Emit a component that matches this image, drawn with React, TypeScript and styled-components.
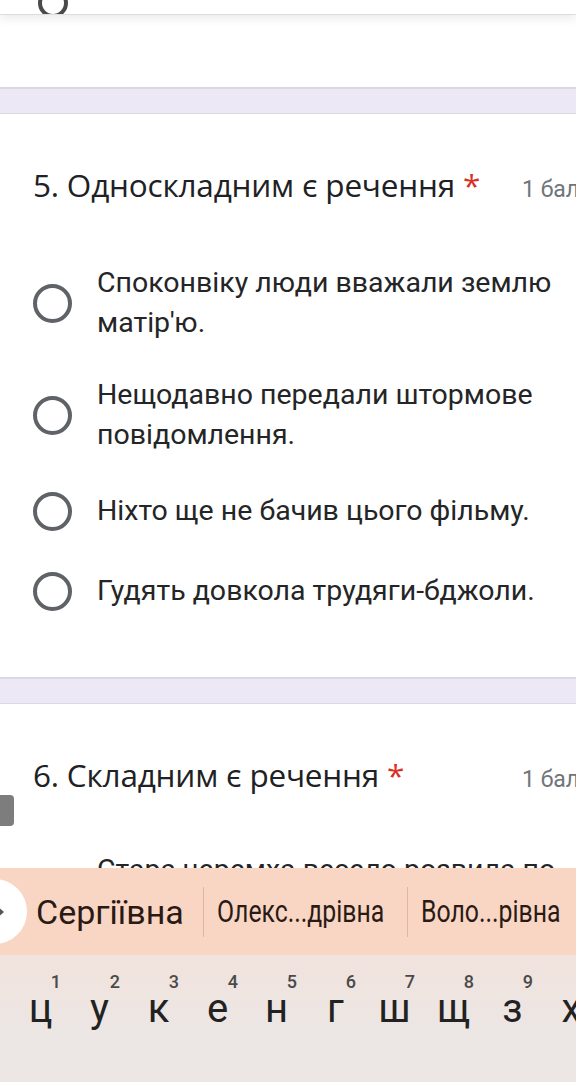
import React from 'react'
import styled, { createGlobalStyle } from 'styled-components'

const COLORS = {
  text: '#202124',
  grey: '#5f6368',
  band: '#ede8f6',
  bandLine: '#dcd8e0',
  red: '#d93025',
  peach: '#f9d5c4',
}

const GlobalStyle = createGlobalStyle`
  html, body {
    margin: 0;
    padding: 0;
    background: #fff;
    overflow: hidden;
  }
`

const Page = styled.div`
  position: relative;
  display: flex;
  flex-direction: column;
  width: 576px;
  height: 1082px;
  overflow: hidden;
  background: #fff;
  font-family: Roboto, 'Noto Sans', sans-serif;
  color: ${COLORS.text};
`

const Form = styled.main`
  flex: 1;
  min-height: 0;
  overflow: hidden;
`

const CardTail = styled.div`
  height: 14px;
  padding-left: 33px;
  border-bottom: 1px solid #dedede;
  box-shadow: 0 4px 10px rgba(0, 0, 0, 0.08);
  overflow: hidden;
`

const PeekRadio = styled.div`
  width: 22px;
  height: 22px;
  margin-top: -12px;
  margin-left: 5px;
  border-radius: 50%;
  border: 4px solid #4a4a4a;
`

const Band = styled.div<{ $top: number }>`
  margin-top: ${(p) => p.$top}px;
  height: 24px;
  background: ${COLORS.band};
  border-top: 2px solid ${COLORS.bandLine};
  border-bottom: 1px solid ${COLORS.bandLine};
`

const Question = styled.section`
  padding: 52px 0 0 33px;
`

const TitleRow = styled.div`
  display: grid;
  grid-template-columns: 489px auto;
  align-items: baseline;
  white-space: nowrap;
`

const Title = styled.h2`
  margin: 0;
  font-family: 'Open Sans', sans-serif;
  font-size: 31.5px;
  font-weight: 400;
  line-height: 38px;
  letter-spacing: -0.2px;
`

const Star = styled.span`
  color: ${COLORS.red};
  margin-left: 8px;
`

const Points = styled.span`
  font-size: 23px;
  color: #70757a;
`

const Options = styled.ul<{ $top: number }>`
  list-style: none;
  margin: ${(p) => p.$top}px 0 0;
  padding: 0;
  display: flex;
  flex-direction: column;
  gap: 32px;
`

const Option = styled.li`
  display: flex;
  align-items: center;
  min-height: 48px;
  gap: 25px;
`

const Radio = styled.span`
  flex-shrink: 0;
  width: 31px;
  height: 31px;
  border-radius: 50%;
  border: 4px solid ${COLORS.grey};
`

const Label = styled.span`
  font-size: 28.5px;
  line-height: 40px;
  width: 470px;
  color: #242526;
  white-space: nowrap;
`

const Scrollbar = styled.div`
  position: absolute;
  left: 0;
  top: 795px;
  width: 14px;
  height: 31px;
  border-radius: 0 4px 4px 0;
  background: #7d7d7d;
`

const Keyboard = styled.div`
  flex-shrink: 0;
  height: 214px;
  background: linear-gradient(#f8dfd4, #ece6e4 75%);
`

const Suggestions = styled.div`
  position: relative;
  height: 87px;
  background: ${COLORS.peach};
  display: flex;
  align-items: center;
  padding-left: 36px;
`

const ExpandButton = styled.div`
  position: absolute;
  left: -38px;
  top: 11px;
  width: 65px;
  height: 65px;
  border-radius: 50%;
  background: #fff;
  display: flex;
  align-items: center;
  justify-content: flex-end;
  padding-right: 22px;
  box-sizing: border-box;
`

const Suggestion = styled.div<{ $w: number; $narrow?: boolean }>`
  width: ${(p) => p.$w}px;
  flex-shrink: 0;
  font-size: ${(p) => (p.$narrow ? 31 : 34)}px;
  color: #2a1a14;
  white-space: nowrap;
  span {
    display: inline-block;
    transform-origin: left center;
    transform: scaleX(${(p) => (p.$narrow ? 0.8 : 1)});
  }
`

const Divider = styled.div`
  flex-shrink: 0;
  width: 1px;
  height: 50px;
  margin-right: 13px;
  background: #deb6a4;
`

const KeyRow = styled.div`
  display: flex;
  padding: 26px 0 0 11px;
`

const Key = styled.div`
  position: relative;
  width: 59px;
  flex-shrink: 0;
  text-align: center;
  font-size: 40px;
  line-height: 56px;
  color: #222;
`

const Hint = styled.span`
  position: absolute;
  top: -9px;
  right: 9px;
  font-size: 18px;
  line-height: 20px;
  font-weight: 500;
  color: #4a4a4a;
`

const q5 = [
  ['Споконвіку люди вважали землю', 'матір\'ю.'],
  ['Нещодавно передали штормове', 'повідомлення.'],
  ['Ніхто ще не бачив цього фільму.'],
  ['Гудять довкола трудяги-бджоли.'],
]

const keys = ['ц', 'у', 'к', 'е', 'н', 'г', 'ш', 'щ', 'з', 'х']

function Lines({ lines }: { lines: string[] }) {
  return (
    <Label>
      {lines.map((l, i) => (
        <React.Fragment key={l}>
          {i > 0 && <br />}
          {l}
        </React.Fragment>
      ))}
    </Label>
  )
}

function App() {
  return (
    <Page>
      <GlobalStyle />
      <Form>
        <CardTail>
          <PeekRadio />
        </CardTail>
        <Band $top={72} />
        <Question>
          <TitleRow>
            <Title>
              5. Односкладним є речення<Star>*</Star>
            </Title>
            <Points>1 бал</Points>
          </TitleRow>
          <Options $top={59}>
            {q5.map((lines) => (
              <Option key={lines[0]}>
                <Radio />
                <Lines lines={lines} />
              </Option>
            ))}
          </Options>
        </Question>
        <Band $top={62} />
        <Question>
          <TitleRow>
            <Title>
              6. Складним є речення<Star>*</Star>
            </Title>
            <Points>1 бал</Points>
          </TitleRow>
          <Options $top={56}>
            <Option>
              <Radio />
              <Lines lines={['Стара черемха весело розвила по', 'всьому саду.']} />
            </Option>
          </Options>
        </Question>
      </Form>
      <Scrollbar />
      <Keyboard>
        <Suggestions>
          <ExpandButton>
            <svg width="12" height="16" viewBox="0 0 12 16">
              <path d="M2 2l7 6-7 6" fill="none" stroke="#555" strokeWidth="2.6" />
            </svg>
          </ExpandButton>
          <Suggestion $w={167}>
            <span>Сергіївна</span>
          </Suggestion>
          <Divider />
          <Suggestion $w={190} $narrow>
            <span>Олекс...дрівна</span>
          </Suggestion>
          <Divider />
          <Suggestion $w={150} $narrow>
            <span>Воло...рівна</span>
          </Suggestion>
        </Suggestions>
        <KeyRow>
          {keys.map((k, i) => (
            <Key key={k}>
              {k}
              {i < 9 && <Hint>{i + 1}</Hint>}
            </Key>
          ))}
        </KeyRow>
      </Keyboard>
    </Page>
  )
}

export default App
